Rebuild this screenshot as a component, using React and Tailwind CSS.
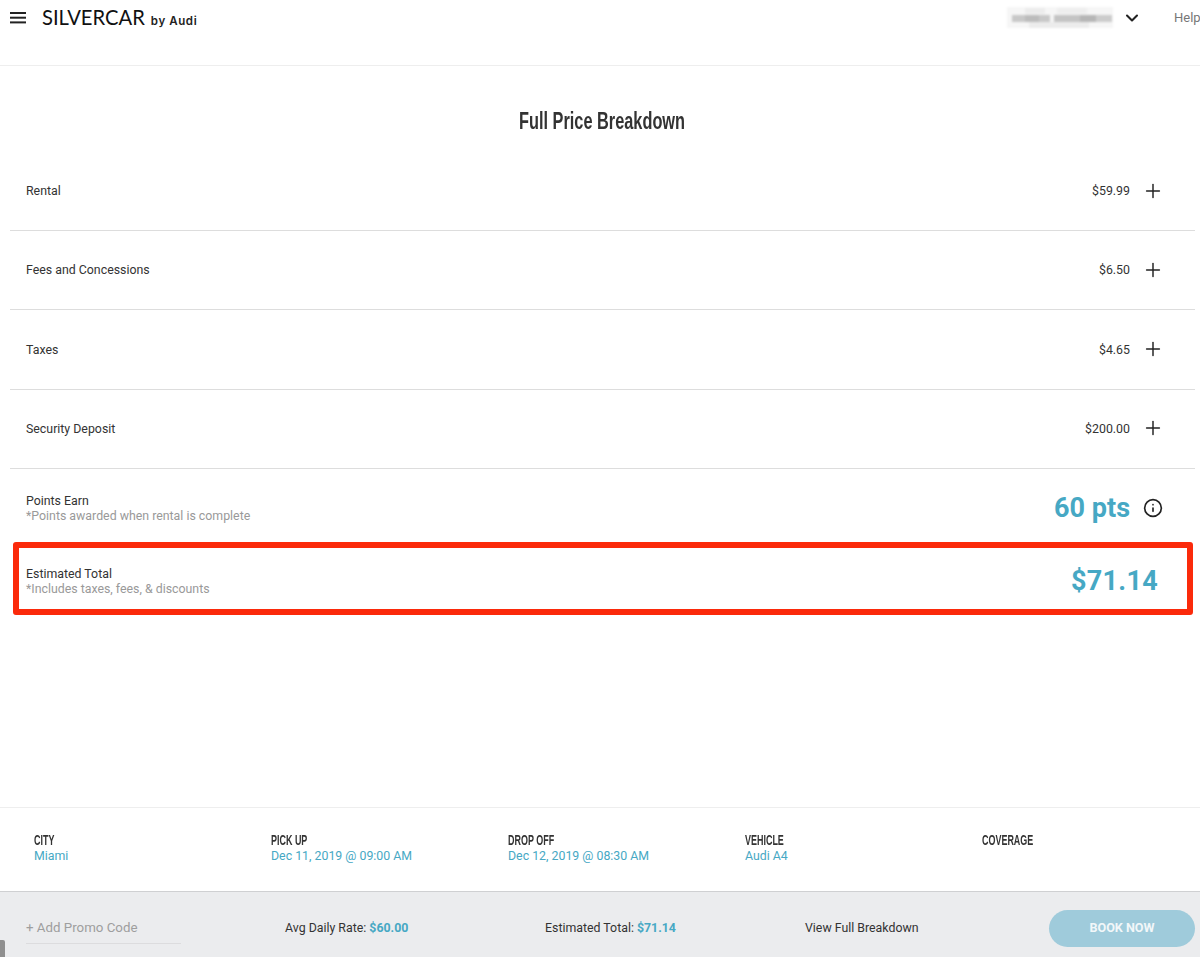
import { ChevronDown, Plus, Info } from "lucide-react";

const rows = [
  { label: "Rental", price: "$59.99" },
  { label: "Fees and Concessions", price: "$6.50" },
  { label: "Taxes", price: "$4.65" },
  { label: "Security Deposit", price: "$200.00" },
];

const trip = [
  { title: "CITY", value: "Miami" },
  { title: "PICK UP", value: "Dec 11, 2019 @ 09:00 AM" },
  { title: "DROP OFF", value: "Dec 12, 2019 @ 08:30 AM" },
  { title: "VEHICLE", value: "Audi A4" },
  { title: "COVERAGE", value: "" },
];

// blurred out account name
function Redacted() {
  return (
    <svg width="106" height="22" viewBox="0 0 106 22" className="blur-[0.8px]">
      <rect x="0" y="0" width="106" height="21" fill="#f6f6f6" />
      <rect x="18" y="1" width="20" height="6" fill="#ececec" />
      <rect x="50" y="1" width="30" height="6" fill="#eeeeee" />
      <rect x="22" y="15" width="60" height="6" fill="#ececec" />
      <rect x="5" y="8" width="38" height="7" fill="#c8c8c8" />
      <rect x="18" y="8" width="14" height="7" fill="#bcbcbc" />
      <rect x="47" y="8" width="26" height="7" fill="#c4c4c4" />
      <rect x="73" y="8" width="16" height="7" fill="#b6b6b6" />
      <rect x="89" y="8" width="16" height="7" fill="#cccccc" />
    </svg>
  );
}

export default function App() {
  return (
    <div className="relative h-[957px] w-[1200px] overflow-hidden bg-white font-['Roboto',sans-serif] text-[12.35px] text-[#333]">
      {/* top bar */}
      <header className="flex h-[66px] items-start border-b border-[#eeeeee] pt-[6px]">
        <svg width="16" height="12" viewBox="0 0 16 12" className="ml-[10px] mt-[6px] text-[#222]">
          <rect y="0" width="16" height="2" fill="currentColor" />
          <rect y="4.7" width="16" height="2" fill="currentColor" />
          <rect y="9.4" width="16" height="2" fill="currentColor" />
        </svg>
        <div className="ml-[16px] flex items-baseline">
          <span className="font-['Lato',sans-serif] text-[20.2px] leading-[22px] text-[#111]">SILVERCAR</span>
          <span className="ml-[6px] font-['Inter',sans-serif] text-[11.5px] font-semibold tracking-[0.6px] text-[#222]">by Audi</span>
        </div>
        <div className="ml-auto flex items-center pt-px">
          <Redacted />
          <ChevronDown size={20} strokeWidth={2.5} className="ml-[9px] text-[#222]" />
          <span className="ml-[32px] mr-[-1px] w-[27px] overflow-hidden text-[13px] text-[#777]">Help</span>
        </div>
      </header>

      <h1 className="mt-[39px] pl-[4px] text-center font-['Liberation_Sans',sans-serif] text-[24px] font-bold leading-[32px] text-[#333]">
        <span className="inline-block scale-x-[0.68]">Full Price Breakdown</span>
      </h1>

      {/* price rows */}
      <div className="mx-[10px] mt-[15px] w-[1185px]">
        {rows.map((row) => (
          <div key={row.label} className="flex h-[79.3px] items-center border-b border-[#dddddd] pb-[1px] pl-[16px] pr-[31px] first:h-[79px]">
            <span className="pt-[2px]">{row.label}</span>
            <span className="ml-auto pt-[2px]">{row.price}</span>
            <Plus size={22} strokeWidth={1.6} className="ml-[12px] text-[#222]" />
          </div>
        ))}

        <div className="flex h-[77px] items-center pl-[16px] pr-[32px] pt-[2px]">
          <div className="pt-[2px] leading-[15px]">
            <div className="text-[#333]">Points Earn</div>
            <div className="text-[#999]">*Points awarded when rental is complete</div>
          </div>
          <span className="ml-auto text-[27px] font-bold text-[#46a8c4]">60 pts</span>
          <Info size={20} strokeWidth={2} className="ml-[13px] text-[#222]" />
        </div>

        <div className="flex h-[69px] items-center pl-[16px] pr-[37px] pt-[2px]">
          <div className="pt-[2px] leading-[15px]">
            <div className="text-[#333]">Estimated Total</div>
            <div className="text-[#999]">*Includes taxes, fees, & discounts</div>
          </div>
          <span className="ml-auto text-[27px] font-bold tracking-[0.3px] text-[#46a8c4]">$71.14</span>
        </div>
      </div>

      {/* red annotation */}
      <div className="absolute left-[13px] top-[542px] h-[73px] w-[1180px] rounded-[3px] border-[6px] border-[#fb2a0b]" />

      {/* trip summary */}
      <div className="absolute bottom-0 left-0 w-full">
        <div className="grid h-[84px] grid-cols-[237px_237px_237px_237px_1fr] border-t border-[#eeeeee] pl-[34px] pt-[25px]">
          {trip.map((item) => (
            <div key={item.title} className="leading-[15px]">
              <div className="origin-left scale-x-[0.64] whitespace-nowrap font-['Liberation_Sans',sans-serif] text-[14px] font-bold text-[#333]">{item.title}</div>
              <div className="pt-px text-[#46a8c4]">{item.value}</div>
            </div>
          ))}
        </div>

        {/* bottom bar */}
        <div className="flex h-[66px] items-center border-t border-[#cfd0d2] bg-[#ebecee] pt-[8px]">
          <div className="ml-[26px] flex h-[30px] w-[155px] items-center border-b border-[#dcdcde] text-[13.3px] text-[#9e9e9e]">+ Add Promo Code</div>
          <div className="ml-[104px] w-[260px]">
            Avg Daily Rate: <span className="font-bold text-[#46a8c4]">$60.00</span>
          </div>
          <div className="w-[260px]">
            Estimated Total: <span className="font-bold text-[#46a8c4]">$71.14</span>
          </div>
          <div>View Full Breakdown</div>
          <button className="ml-auto mr-[5px] h-[37px] w-[146px] rounded-full bg-[#9fcbdb] text-[12.6px] font-bold text-[#f2f7f9]">BOOK NOW</button>
        </div>
      </div>

      {/* scroll handle */}
      <div className="absolute bottom-0 left-0 h-[17px] w-[5px] rounded-tr-[2px] bg-[#8f8f8f]" />
    </div>
  );
}
